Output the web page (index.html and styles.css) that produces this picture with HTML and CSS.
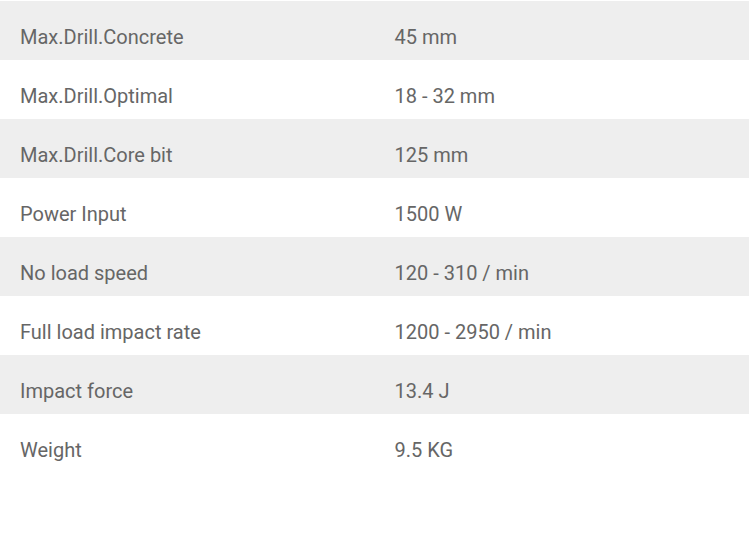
FILE: index.html
```html
<!DOCTYPE html>
<html>
<head>
<meta charset="utf-8">
<link rel="stylesheet" href="styles.css">
</head>
<body>
<table class="specs">
<tbody>
<tr><td>Max.Drill.Concrete</td><td>45 mm</td></tr>
<tr><td>Max.Drill.Optimal</td><td>18 - 32 mm</td></tr>
<tr><td>Max.Drill.Core bit</td><td>125 mm</td></tr>
<tr><td>Power Input</td><td>1500 W</td></tr>
<tr><td>No load speed</td><td>120 - 310 / min</td></tr>
<tr><td>Full load impact rate</td><td>1200 - 2950 / min</td></tr>
<tr><td>Impact force</td><td>13.4 J</td></tr>
<tr><td>Weight</td><td>9.5 KG</td></tr>
</tbody>
</table>
</body>
</html>
```
FILE: styles.css
```css
html, body {
  margin: 0;
  padding: 0;
  background: #fff;
}
body {
  font-family: Roboto, "Liberation Sans", sans-serif;
  font-size: 20px;
  color: #666;
}
.specs {
  width: 749px;
  margin-top: 1px;
  border-collapse: collapse;
  table-layout: fixed;
}
.specs td {
  width: 50%;
  height: 59px;
  padding: 13px 0 0 20px;
  vertical-align: middle;
  box-sizing: border-box;
  line-height: 22px;
}
.specs tr:nth-child(odd) td {
  background: #eee;
}
```
